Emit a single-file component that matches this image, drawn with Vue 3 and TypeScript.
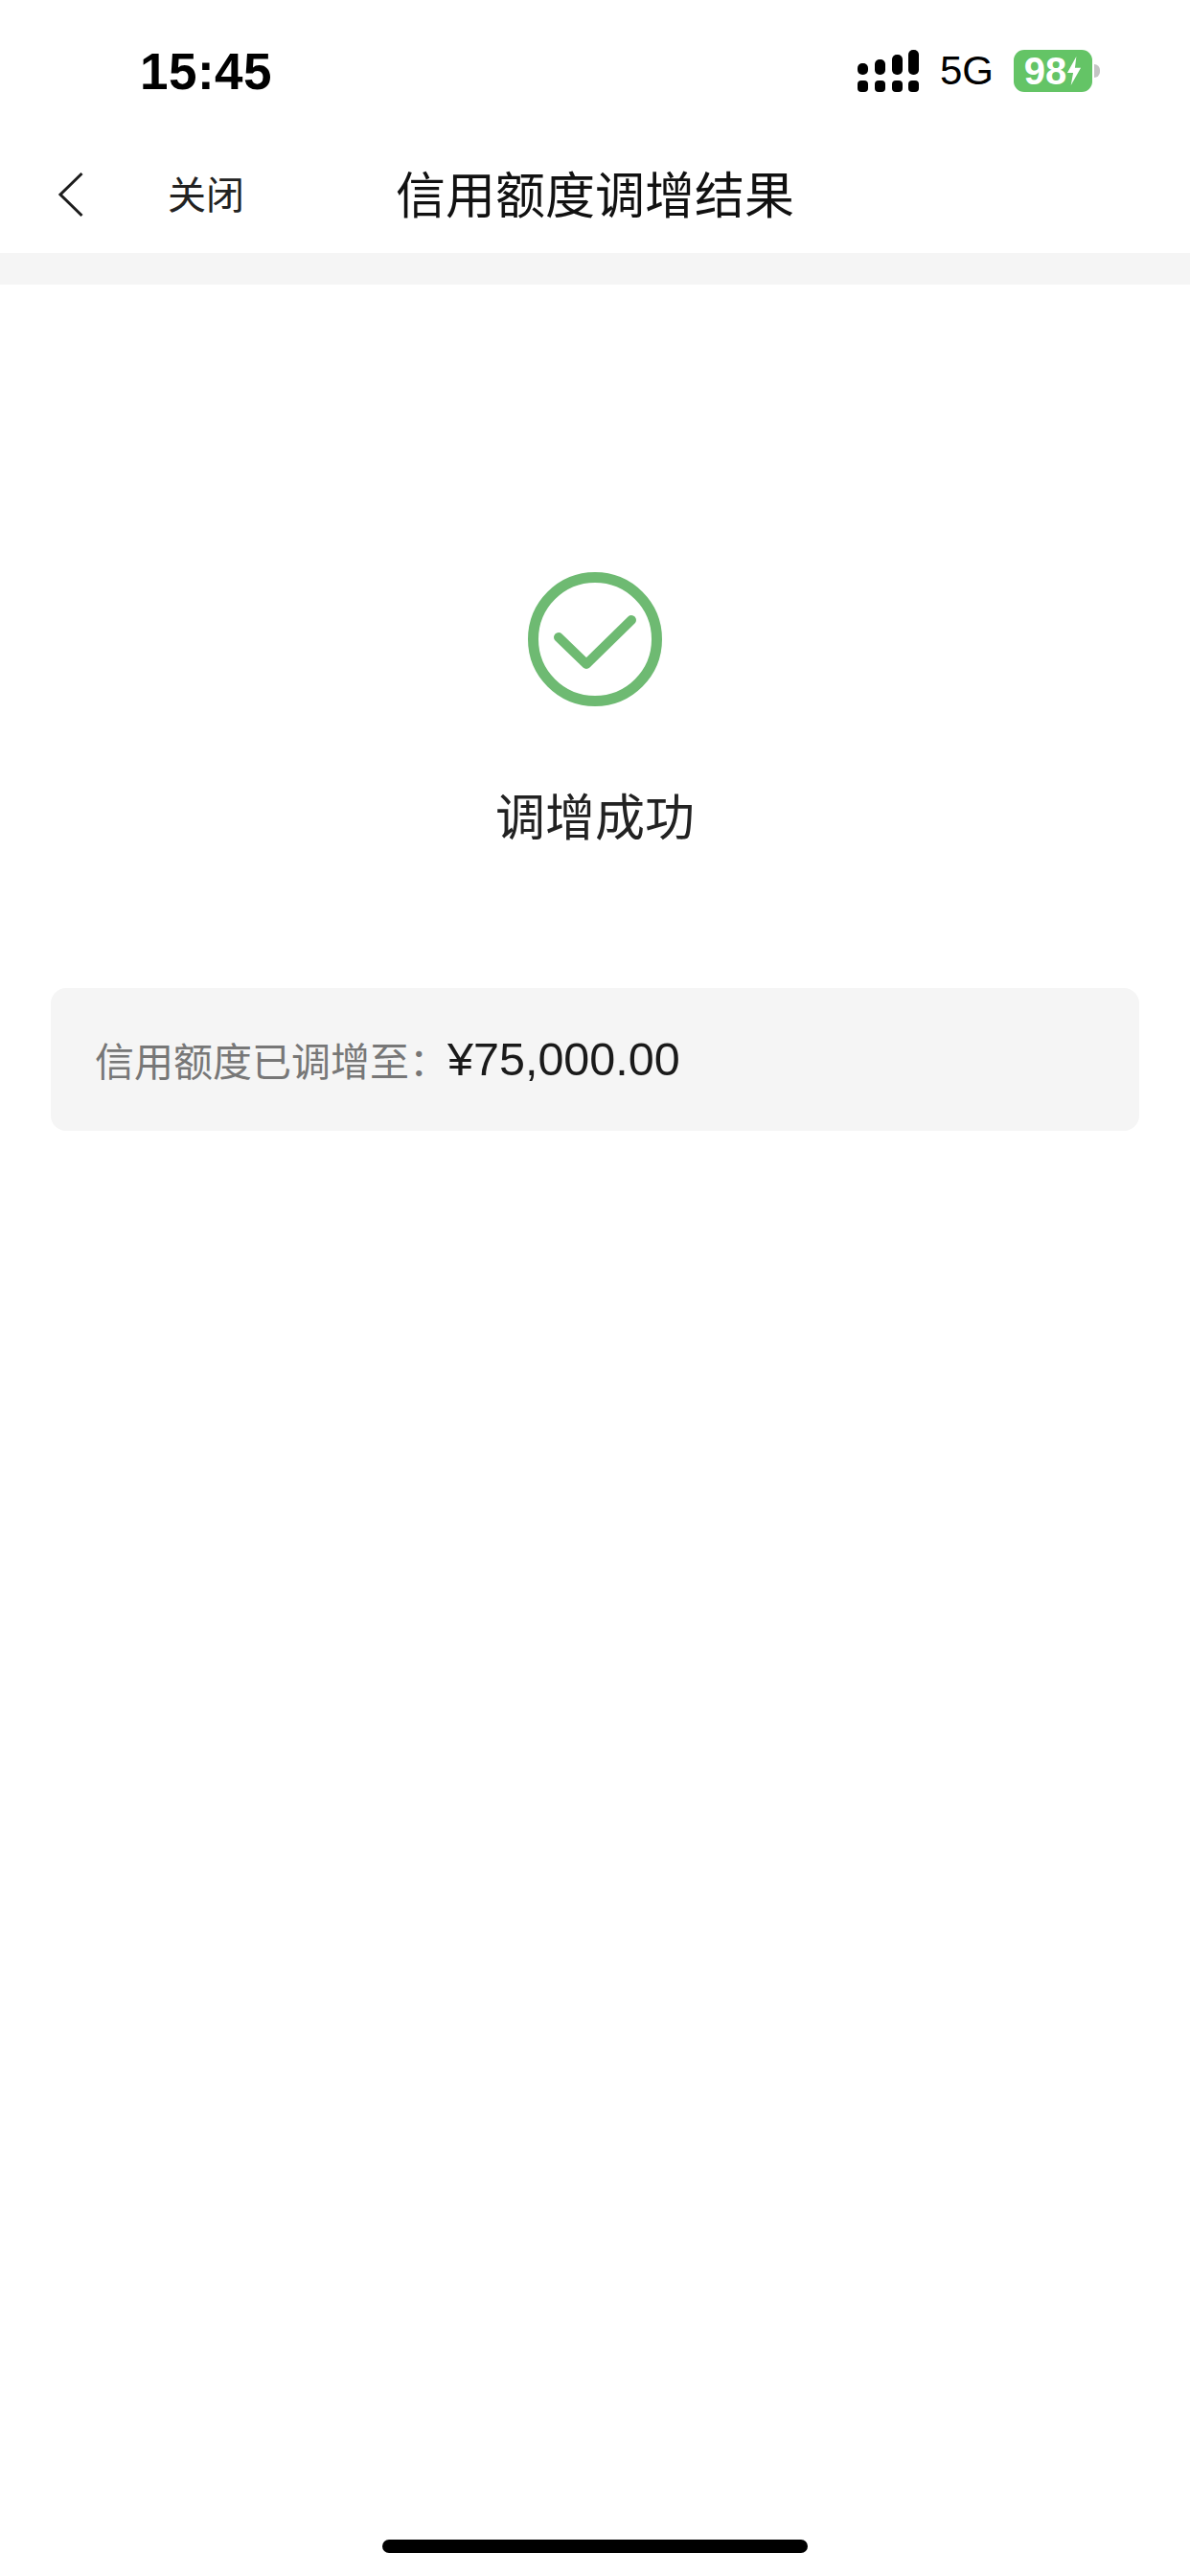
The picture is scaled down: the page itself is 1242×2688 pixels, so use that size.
<template>
  <div class="page">
    <!-- 状态栏 -->
    <div class="status-bar">
      <span class="time">15:45</span>
      <div class="status-right">
        <svg class="signal" width="64" height="44" viewBox="0 0 64 44">
          <g fill="#000">
            <rect v-for="bar in signalBars" :key="bar.x" :x="bar.x" :y="bar.y" width="11" :height="26 - bar.y" rx="5" />
            <rect v-for="bar in signalBars" :key="bar.x" :x="bar.x" y="32" width="11" height="12" rx="4" />
          </g>
        </svg>
        <span class="net">5G</span>
        <div class="battery">
          <span class="battery-num">98</span>
          <svg class="bolt" width="16" height="34" viewBox="0 0 17 32">
            <path d="M11 0 L1 18 H7.5 L5 32 L16 12.5 H9.5 Z" fill="#fff" />
          </svg>
          <i class="battery-nub"></i>
        </div>
      </div>
    </div>

    <!-- 导航栏 -->
    <div class="nav">
      <div class="nav-left">
        <svg class="back" width="28" height="48" viewBox="0 0 28 48">
          <path d="M25.5 2 L3 24 L25.5 46" fill="none" stroke="#1c1c1c" stroke-width="3" />
        </svg>
        <span class="close">关闭</span>
      </div>
      <span class="title">信用额度调增结果</span>
      <div></div>
    </div>
    <div class="band"></div>

    <!-- 结果 -->
    <div class="result">
      <svg width="140" height="140" viewBox="0 0 140 140">
        <circle cx="70" cy="70" r="64.5" fill="none" stroke="#6eba72" stroke-width="11" />
        <path d="M32 68 L61 96 L108 50" fill="none" stroke="#6eba72" stroke-width="10" stroke-linecap="round" stroke-linejoin="round" />
      </svg>
      <span class="result-text">调增成功</span>
    </div>

    <div class="card">
      <span class="card-label">信用额度已调增至：</span>
      <span class="card-amount">{{ amount }}</span>
    </div>

    <div class="home-bar"></div>
  </div>
</template>

<script setup lang="ts">
const amount = '¥75,000.00'

// 信号格上半部分的起始高度
const signalBars = [
  { x: 0, y: 14 },
  { x: 18, y: 10 },
  { x: 36, y: 5 },
  { x: 53, y: 0 }
]
</script>

<style>
html,
body {
  margin: 0;
  background: #fff;
}
</style>

<style scoped>
.page {
  display: flex;
  flex-direction: column;
  width: 1242px;
  height: 2688px;
  background: #fff;
  font-family: "Liberation Sans", "Noto Sans CJK SC", sans-serif;
  color: #1a1a1a;
}

.status-bar {
  display: flex;
  align-items: center;
  justify-content: space-between;
  box-sizing: border-box;
  height: 148px;
  padding: 0 102px 0 146px;
}

.time {
  font-size: 53px;
  font-weight: 700;
  letter-spacing: 0.5px;
  color: #000;
  line-height: 1;
}

.status-right {
  display: flex;
  align-items: center;
}

.signal {
  margin-right: 22px;
}

.net {
  width: 77px;
  font-size: 42px;
  color: #000;
  line-height: 44px;
}

.battery {
  position: relative;
  display: flex;
  align-items: center;
  justify-content: center;
  width: 82px;
  height: 44px;
  border-radius: 11px;
  background: #64c466;
}

.battery-num {
  font-size: 40px;
  font-weight: 700;
  color: #fff;
  line-height: 1;
}

.bolt {
  flex-shrink: 0;
}

.battery-nub {
  position: absolute;
  right: -8px;
  top: 15px;
  width: 6px;
  height: 14px;
  border-radius: 0 7px 7px 0;
  background: #c4c4c4;
}

.nav {
  display: grid;
  grid-template-columns: 1fr auto 1fr;
  align-items: center;
  box-sizing: border-box;
  height: 116px;
  padding-bottom: 8px;
}

.nav-left {
  display: flex;
  align-items: center;
  padding-left: 60px;
}

.back {
  margin-top: 2px;
}

.close {
  margin-left: 87px;
  margin-top: -2px;
  font-size: 40px;
  color: #222;
}

.title {
  font-size: 52px;
  line-height: 64px;
  margin-top: 6px;
  color: #111;
}

.band {
  height: 33px;
  background: #f5f5f5;
}

.result {
  display: flex;
  flex-direction: column;
  align-items: center;
  padding-top: 300px;
}

.result-text {
  margin-top: 79px;
  font-size: 52px;
  line-height: 76px;
  color: #222;
}

.card {
  display: flex;
  align-items: center;
  box-sizing: border-box;
  height: 149px;
  margin: 139px 53px 0;
  padding: 0 46px;
  border-radius: 16px;
  background: #f5f5f5;
}

.card-label {
  font-size: 41px;
  margin-top: -2px;
  color: #777;
}

.card-amount {
  margin-left: -1px;
  margin-top: -2px;
  font-size: 48.5px;
  color: #1a1a1a;
}

.home-bar {
  align-self: center;
  width: 444px;
  height: 14px;
  margin: auto 0 24px;
  border-radius: 7px;
  background: #000;
}
</style>
